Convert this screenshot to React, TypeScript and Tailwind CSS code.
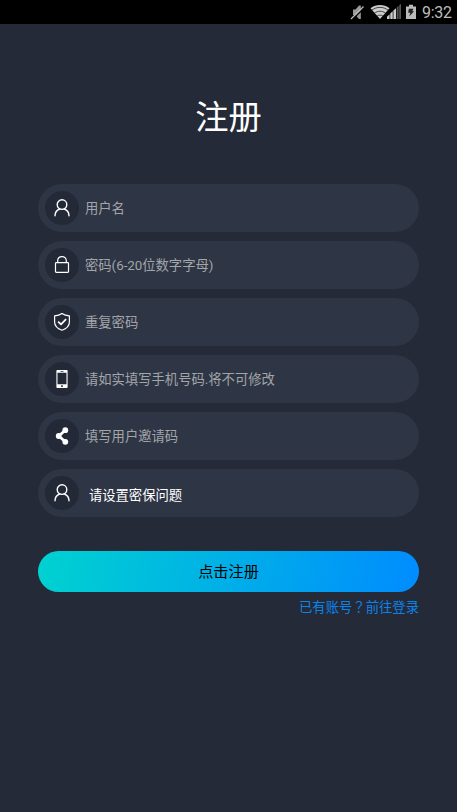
import React from "react";

function UserIcon() {
  return (
    <svg width="18" height="20" viewBox="0 0 18 20" fill="none" stroke="#fff" strokeWidth="1.4" strokeLinecap="round">
      <circle cx="9" cy="6.6" r="4.8" />
      <path d="M2 17.7C2.1 14.2 4 12 6.6 11M16 17.7C15.9 14.2 14 12 11.4 11" />
    </svg>
  );
}

function LockIcon() {
  return (
    <svg width="18" height="20" viewBox="0 0 18 20" fill="none" stroke="#fff" strokeWidth="1.2">
      <rect x="2.5" y="7.6" width="13" height="9.8" rx="0.8" />
      <path d="M4.7 7.6V5.7C4.7 3.1 6.6 1.6 9 1.6s4.3 1.5 4.3 4.1v1.9" />
    </svg>
  );
}

function ShieldIcon() {
  return (
    <svg width="18" height="20" viewBox="0 0 18 20" fill="none" stroke="#fff" strokeWidth="1.2" strokeLinejoin="round">
      <path d="M9 1.6C7 3.1 4.4 3.8 1.6 3.8V10c0 4.1 3.1 6.7 7.4 8.2 4.3-1.5 7.4-4.1 7.4-8.2V3.8C13.6 3.8 11 3.1 9 1.6Z" />
      <path d="M5.1 9.6 8 12.4l5.1-5.2" strokeWidth="1.7" />
    </svg>
  );
}

function PhoneIcon() {
  return (
    <svg width="18" height="20" viewBox="0 0 18 20">
      <path
        fill="#fff"
        fillRule="evenodd"
        d="M4.2 1h9.6c.5 0 .8.4.8.8v16.4c0 .5-.3.8-.8.8H4.2c-.5 0-.8-.3-.8-.8V1.8c0-.4.3-.8.8-.8ZM4.5 3.7v11.6h9V3.7ZM7.5 2v.7h3V2ZM8.2 16.2v1.7h1.6v-1.7Z"
      />
    </svg>
  );
}

function ShareIcon() {
  return (
    <svg width="18" height="20" viewBox="0 0 18 20" fill="#fff" stroke="#fff">
      <path d="M12.3 4.2 5.8 10l6.5 5.8" fill="none" strokeWidth="2.8" />
      <circle cx="12.3" cy="4.2" r="2.9" stroke="none" />
      <circle cx="5.7" cy="10" r="2.9" stroke="none" />
      <circle cx="12.3" cy="15.8" r="2.9" stroke="none" />
    </svg>
  );
}

function StatusBar() {
  return (
    <div className="flex h-6 items-center justify-end bg-black pr-[5px]">
      <svg width="70" height="24" viewBox="0 0 70 24">
        <path fill="#999" d="M4 9.5h2.5l3.5-4h1.8v13.5H10l-3.5-4H4Z" />
        <path d="M3 20 15.5 7.5" stroke="#000" strokeWidth="1.5" />
        <path d="M2 19 14.5 6.5" stroke="#bbb" strokeWidth="1.3" />
        <path fill="#ccc" d="M31 19 21.5 8.2C27 4 35 4 40.5 8.2Z" />
        <path d="M22.8 10.2c5-3.8 11.4-3.8 16.4 0M25.4 13.2c3.4-2.6 7.8-2.6 11.2 0M28 16.1c1.8-1.3 4.2-1.3 6 0" fill="none" stroke="#222" strokeWidth=".8" />
        <path fill="#ccc" d="M38 19v-2.3l2.6-2.4V19ZM41.3 19v-5.4l2.4-2.3V19ZM44.4 19v-8.4l2.6-2.4V19Z" />
        <path fill="#555" d="M47.7 19V7.6l1.9-1.8V19ZM50.2 19V5.3L52 3.7V19Z" />
        <path fill="#bbb" d="M57 6.5h3V4.8h4v1.7h3V19H57Z" />
        <path fill="#222" d="M59.8 8.8h4.7l-1.3 2.5h1.9l-4.9 5.2 1.2-3.8h-2.2Z" />
      </svg>
      <span className="ml-[3px] mt-0.5 w-[30px] whitespace-nowrap font-[Roboto,sans-serif] text-[16px] leading-6 tracking-[-0.3px] text-[#bdbdbd]">9:32</span>
    </div>
  );
}

const fields = [
  { icon: <UserIcon />, label: "用户名" },
  { icon: <LockIcon />, label: "密码(6-20位数字字母)" },
  { icon: <ShieldIcon />, label: "重复密码" },
  { icon: <PhoneIcon />, label: "请如实填写手机号码.将不可修改" },
  { icon: <ShareIcon />, label: "填写用户邀请码" },
];

function Row({ icon, children }: { icon: React.ReactNode; children: React.ReactNode }) {
  return (
    <div className="flex h-12 items-center rounded-full bg-[#2e3545] pl-[7px]">
      <div className="flex size-[34px] shrink-0 items-center justify-center rounded-full bg-[#232937]">{icon}</div>
      {children}
    </div>
  );
}

export default function App() {
  return (
    <div className="h-[812px] w-[457px] overflow-hidden bg-[#242a38] font-[Roboto,'Noto_Sans_CJK_SC',sans-serif] text-[13.33px]">
      <StatusBar />
      <main className="flex flex-col px-[38px]">
        <h1 className="mt-[70px] h-[90px] text-center text-[33.3px] leading-[48px] text-white">注册</h1>
        <div className="flex flex-col gap-[9px]">
          {fields.map((field) => (
            <Row key={field.label} icon={field.icon}>
              <span className="ml-1.5 mt-0.5 whitespace-nowrap leading-5 tracking-[-0.02px] text-[#a3a5a9]">{field.label}</span>
            </Row>
          ))}
          <Row icon={<UserIcon />}>
            <span className="ml-2.5 mt-1.5 whitespace-nowrap leading-5 tracking-[-0.04px] text-white">请设置密保问题</span>
          </Row>
        </div>
        <button className="mt-[33.5px] h-[41.5px] rounded-full bg-[linear-gradient(100deg,#00d2d0,#008cff)] pt-0.5 text-[15.2px] text-black">点击注册</button>
        <a className="mt-[5px] text-right leading-5 text-[#0b84ea]">
          已有账号<span className="font-['Noto_Sans_CJK_TC',sans-serif]" lang="zh-TW">？</span>前往登录
        </a>
      </main>
    </div>
  );
}
